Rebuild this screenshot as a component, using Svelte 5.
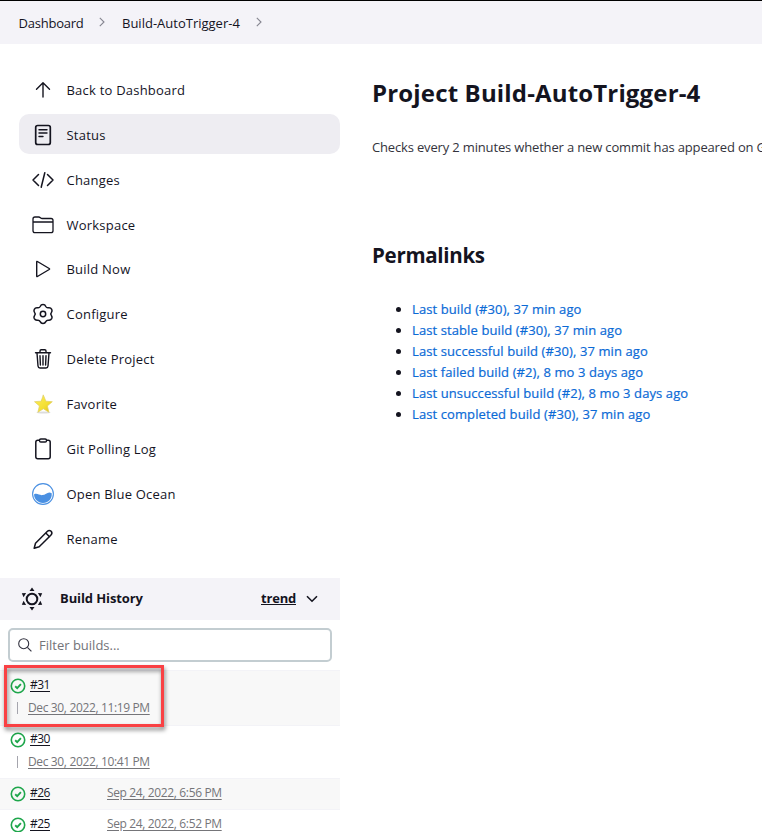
<script>
  const tasks = [
    { icon: 'up', label: 'Back to Dashboard' },
    { icon: 'status', label: 'Status', active: true },
    { icon: 'code', label: 'Changes' },
    { icon: 'folder', label: 'Workspace' },
    { icon: 'play', label: 'Build Now' },
    { icon: 'gear', label: 'Configure' },
    { icon: 'trash', label: 'Delete Project' },
    { icon: 'star', label: 'Favorite' },
    { icon: 'clipboard', label: 'Git Polling Log' },
    { icon: 'ocean', label: 'Open Blue Ocean' },
    { icon: 'pencil', label: 'Rename' }
  ];
  const links = [
    'Last build (#30), 37 min ago',
    'Last stable build (#30), 37 min ago',
    'Last successful build (#30), 37 min ago',
    'Last failed build (#2), 8 mo 3 days ago',
    'Last unsuccessful build (#2), 8 mo 3 days ago',
    'Last completed build (#30), 37 min ago'
  ];
  const builds = [
    { id: '#31', date: 'Dec 30, 2022, 11:19 PM', tall: true, marked: true },
    { id: '#30', date: 'Dec 30, 2022, 10:41 PM', tall: true },
    { id: '#26', date: 'Sep 24, 2022, 6:56 PM' },
    { id: '#25', date: 'Sep 24, 2022, 6:52 PM' }
  ];
</script>

{#snippet glyph(name)}
  <svg class="icon" viewBox="0 0 24 24" fill="none" stroke="#14141f" stroke-width="1.6" stroke-linecap="round" stroke-linejoin="round">
    {#if name === 'up'}
      <path d="M12 19V5M5.500 11.200L12 4.700l6.500 6.500" stroke-width="1.400" />
    {:else if name === 'status'}
      <rect x="4.700" y="2.500" width="14.600" height="19" rx="2" stroke-width="1.700" />
      <path d="M8 6.700h8M8 10h8M8 13.500h4" stroke-width="1.400" />
    {:else if name === 'code'}
      <path d="M7.500 6.500L2 12l5.500 5.500M16.500 6.500L22 12l-5.500 5.500M13.800 4.800L10.200 19.200" stroke-width="1.500" />
    {:else if name === 'folder'}
      <path d="M2 17.700V6q0-2 2-2h3.700c1.700 0 1.700 1.500 3.500 1.500H20q2 0 2 2v10.200q0 2-2 2H4q-2 0-2-2zM2 9h20" stroke-width="1.300" />
    {:else if name === 'play'}
      <path d="M5.700 4.900v14.200q0 .8.700.4l11.800-7q.8-.5 0-1L6.400 4.500q-.7-.4-.7.4z" stroke-width="1.400" />
    {:else if name === 'gear'}
      <path d="M12 2.600c1.800 0 2.300.7 2.800 1.900.5 1 1.500 1.500 2.600 1.300 1.500-.2 2.500 0 3.300 1.500.7 1.400.5 2.200-.3 3.200-.8.900-.8 2.100 0 3 .8 1 1 1.900.3 3.200-.8 1.400-1.700 1.700-3.200 1.500-1.200-.2-2.200.4-2.700 1.400-.5 1.200-1.100 1.900-2.800 1.900s-2.300-.7-2.800-1.900c-.5-1-1.500-1.600-2.700-1.400-1.500.2-2.400-.1-3.200-1.500-.7-1.300-.5-2.200.3-3.200.8-.9.800-2.100 0-3-.8-1-1-1.800-.3-3.200.8-1.500 1.800-1.700 3.300-1.500 1.100.2 2.100-.3 2.600-1.300.5-1.200 1-1.900 2.800-1.900z" stroke-width="1.500" />
      <circle cx="12" cy="12" r="2.700" stroke-width="1.500" />
    {:else if name === 'trash'}
      <path d="M4.500 5.700h15M6 6l1 13q.2 2 2 2h6q1.800 0 2-2l1-13M9 5.500V4q0-1.200 1.200-1.200h3.600Q15 2.800 15 4v1.500M9 8.700l.4 9.300M12 8.700V18M15 8.700l-.4 9.300" stroke-width="1.400" />
    {:else if name === 'star'}
      <defs><linearGradient id="gold" x1="0" y1="0" x2="1" y2="1"><stop offset="0" stop-color="#fff05a" /><stop offset=".6" stop-color="#f3df34" /><stop offset="1" stop-color="#dfbd18" /></linearGradient></defs>
      <ellipse cx="12.500" cy="20.500" rx="7" ry="1" fill="#ddd" stroke="none" />
      <path d="M12.400 3.200l2.500 6 6.400.5-4.900 4.200 1.500 6.300-5.500-3.400-5.500 3.400 1.500-6.300-4.900-4.200 6.400-.5z" fill="url(#gold)" stroke="#dfcf62" stroke-width=".7" />
    {:else if name === 'clipboard'}
      <rect x="4.800" y="3.200" width="14.400" height="18.600" rx="2" stroke-width="1.500" />
      <rect x="8.500" y="2" width="7" height="3" rx="1.300" fill="#fff" stroke-width="1.400" />
    {:else if name === 'ocean'}
      <circle cx="12" cy="12" r="10.400" stroke="#4a90e2" stroke-width="1.100" />
      <path d="M3.100 12.300c3-1.500 5.300 1.200 8.300.8 3.600-.4 5.600-4.300 9.300-1.900C21.300 16.800 17.300 20.900 12 20.900S2.900 17 3.100 12.300z" fill="#4a90e2" stroke="none" />
    {:else if name === 'pencil'}
      <path d="M3.200 21.200l1.300-5L16.200 4.500q2-2 4-.2 1.600 2-.4 4L8.200 19.800zM14.800 6l3.700 3.700" stroke-width="1.500" />
    {/if}
  </svg>
{/snippet}

<div class="page">
  <nav class="crumbs">
    <span>Dashboard</span>
    <svg width="6" height="10" viewBox="0 0 6 10"><path d="M.8.8L5 5 .8 9.200" /></svg>
    <span class="job">Build-AutoTrigger-4</span>
    <svg width="6" height="10" viewBox="0 0 6 10"><path d="M.8.8L5 5 .8 9.200" /></svg>
  </nav>
  <div class="body">
    <aside>
      <div class="tasks">
        {#each tasks as t}
          <a class="task" class:active={t.active}>{@render glyph(t.icon)}<span>{t.label}</span></a>
        {/each}
      </div>
      <div class="history">
        <svg class="sun" width="24" height="24" viewBox="0 0 24 24">
          <circle cx="12" cy="12" r="5.300" fill="none" stroke="#14141f" stroke-width="2" />
          <path fill="#14141f" d="M12 .5l2.500 3.500h-5zM12 23.500l2.500-3.500h-5zM1.800 6.200l4.300-.1-2.500 4.200zM22.200 6.200l-4.300-.1 2.500 4.200zM1.800 17.800l4.300.1-2.500-4.200zM22.200 17.800l-4.300.1 2.500-4.200z" />
        </svg>
        <b>Build History</b>
        <b class="trend">trend</b>
        <svg width="12" height="8" viewBox="0 0 12 8"><path d="M1 1.200l5 5 5-5" fill="none" stroke="#14141f" stroke-width="1.600" /></svg>
      </div>
      <div class="filter">
        <svg width="14" height="14" viewBox="0 0 14 14"><g fill="none" stroke="#333340" stroke-width="1.100"><circle cx="5.700" cy="5.700" r="5" /><path d="M9.400 9.400l4 4" /></g></svg>
        <span>Filter builds...</span>
      </div>
      <div class="builds">
        {#each builds as b}
          <div class="build" class:tall={b.tall}>
            {#if b.marked}<div class="marker"></div>{/if}
            <svg width="16" height="16" viewBox="0 0 16 16" fill="none" stroke="#1ea64b"><circle cx="8" cy="8" r="6.700" stroke-width="1.600" /><path d="M5.200 8.300l2 1.900 3.700-4" stroke-width="1.900" /></svg>
            <a class="num">{b.id}</a>
            <div class="when"><a>{b.date}</a></div>
          </div>
        {/each}
      </div>
    </aside>
    <main>
      <h1>Project Build-AutoTrigger-4</h1>
      <p>Checks every 2 minutes whether a new commit has appeared on GitHub</p>
      <h2>Permalinks</h2>
      <ul>
        {#each links as l}<li><a>{l}</a></li>{/each}
      </ul>
    </main>
  </div>
</div>

<style>
  .page {
    width: 762px;
    height: 832px;
    overflow: hidden;
    background: #fff;
    color: #14141f;
    font-family: "Segoe UI", "Open Sans", "Noto Sans", sans-serif;
    font-size: 13px;
    box-sizing: border-box;
    border-top: 1px solid #000;
  }
  .crumbs {
    display: flex;
    align-items: center;
    height: 43px;
    padding-left: 18.5px;
    background: #f4f3f8;
    white-space: nowrap;
    font-size: 13px;
    letter-spacing: -0.22px;
  }
  .crumbs span { width: 80px; line-height: 20px; padding-top: 1px; }
  .crumbs span.job { width: 134px; margin-left: 17.5px; letter-spacing: 0; }
  .crumbs svg { fill: none; stroke: #858590; stroke-width: 1.1; margin-top: -1px; }
  .body { display: flex; }
  aside { width: 340px; flex: none; }
  .tasks {
    display: flex;
    flex-direction: column;
    gap: 4.9px;
    padding: 25px 0 0 19px;
    height: 509px;
  }
  .task {
    display: flex;
    align-items: center;
    flex: none;
    height: 40px;
    padding-left: 12px;
    border-radius: 10px;
    letter-spacing: 0.22px;
  }
  .task.active { background: #eeedf2; }
  .task span { margin-left: 11.5px; line-height: 20px; padding-top: 1.7px; }
  .icon { width: 24px; height: 24px; margin-top: 1.7px; }
  .history {
    display: flex;
    align-items: center;
    height: 42px;
    background: #f4f3f8;
    font-size: 13px;
  }
  .history b { font-weight: 700; padding-bottom: 2px; letter-spacing: -0.1px; }
  .history .sun { margin: 0 16px 0 20px; }
  .history .trend { text-decoration: underline; margin-left: auto; margin-right: 10px; letter-spacing: -0.2px; }
  .history svg:last-child { margin-right: 22px; }
  .filter {
    display: flex;
    align-items: center;
    box-sizing: border-box;
    width: 324px;
    height: 34px;
    margin: 8px 0 8px 8px;
    padding-left: 8px;
    border: 2px solid #c3cdd1;
    border-radius: 5px;
    color: #737378;
  }
  .filter span { margin-left: 7px; }
  .build {
    position: relative;
    display: flex;
    align-items: center;
    flex-wrap: wrap;
    box-sizing: border-box;
    height: 31px;
    padding: 0 0 3px 10px;
    font-size: 12px;
    letter-spacing: -0.36px;
    border-top: 1px solid #f3f3f7;
  }
  .build svg { margin-top: 3px; }
  .build.tall svg { margin-top: 2px; }
  .build.tall { height: 53px; align-content: flex-start; padding-top: 3px; }
  .build.tall:first-child { height: 55px; padding-top: 4px; }
  .build:nth-child(odd) { background: #f8f8f8; }
  .build a { text-decoration: underline; text-underline-offset: 2px; line-height: 19px; }
  .build .num { width: 77px; margin-left: 4px; letter-spacing: -0.5px; }
  .when { color: #757579; line-height: 19px; }
  .tall .when { width: 100%; margin: 4px 0 0 7px; display: flex; align-items: center; }
  .tall .when::before { content: ""; width: 1px; height: 12px; background: #a5a5ad; margin-right: 10px; }
  .marker {
    position: absolute;
    left: 4px;
    top: -6px;
    width: 160px;
    height: 62px;
    box-sizing: border-box;
    border: 3px solid #f94144;
    filter: drop-shadow(1px 3px 2px rgba(0, 0, 0, 0.5));
    z-index: 1;
  }
  main { padding-left: 32px; white-space: nowrap; }
  h1 { margin: 31px 0 0; font-size: 24px; line-height: 36px; font-weight: 700; letter-spacing: 0.16px; }
  p { margin: 26px 0 0; font-size: 13px; line-height: 20px; letter-spacing: -0.16px; color: #33333c; }
  h2 { margin: 84px 0 0; font-size: 20.5px; line-height: 28px; font-weight: 700; letter-spacing: -0.3px; }
  ul { margin: 30px 0 0; padding-left: 40px; }
  li { line-height: 21px; font-size: 13px; }
  li a { color: #0b6ad6; letter-spacing: 0.1px; -webkit-text-stroke: 0.2px #0b6ad6; }
</style>
